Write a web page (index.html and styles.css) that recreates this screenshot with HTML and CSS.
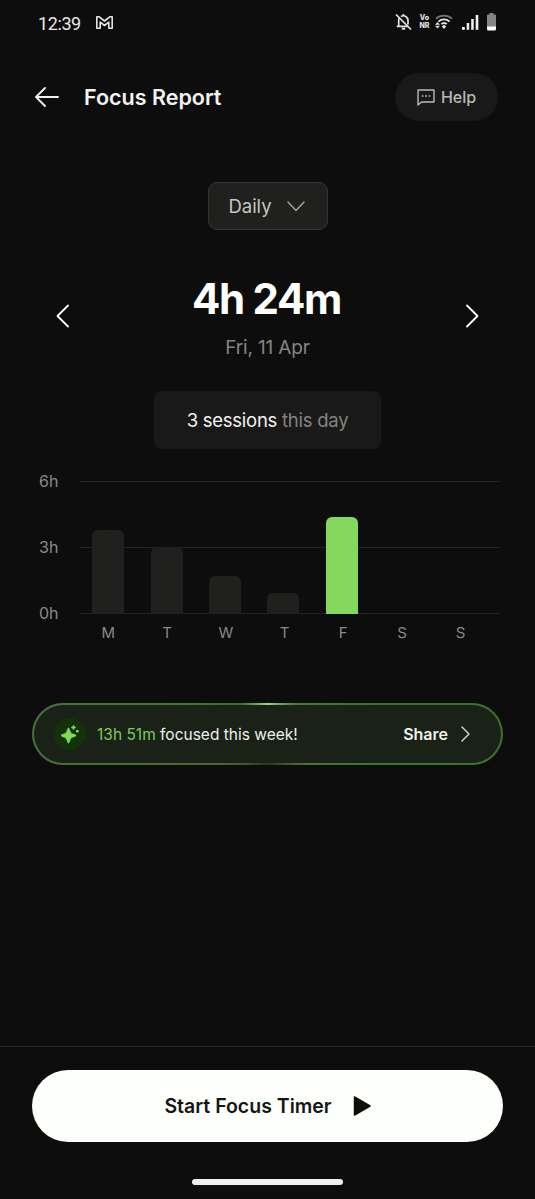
FILE: index.html
```html
<!DOCTYPE html>
<html lang="en">

<head>
    <meta charset="UTF-8">
    <meta name="viewport" content="width=device-width, initial-scale=1.0">
    <title>Focus Report</title>
    <link rel="stylesheet" href="styles.css">
</head>

<body>
    <div class="screen">
        <!-- Status bar -->
        <div class="status-bar">
            <span class="clock">12:39</span>
            <svg class="mail" width="17" height="13" viewBox="0 0 17 13" fill="none" stroke="#e4e4e4" stroke-width="1.6" stroke-linejoin="round">
                <path d="M.8 12.2V.8h2.400L8.500 5 13.800.8h2.400v11.400h-3.400V6.200L8.500 9.500 4.200 6.200v6z" />
            </svg>
            <div class="status-icons">
                <svg width="17" height="18" viewBox="0 0 17 18" fill="none" stroke="#e4e4e4" stroke-width="1.7">
                    <path d="M3.7 13V7.5c0-1 .3-1.900.8-2.700M6 3.500C9.500 1.500 13 4 13 7.500v4M1.700 13.300h11.500M8.400 3V1" />
                    <path d="M1 1.500l15 15" />
                    <path d="M6.800 15.700h3.400" stroke-width="2" />
                </svg>
                <span class="vonr"><span>Vo</span><span>NR</span></span>
                <svg class="wifi" width="18" height="16" viewBox="0 0 18 16" fill="none" stroke="#e4e4e4" stroke-width="1.8">
                    <path d="M1 4.600c4.600-4.100 11.400-4.100 16 0" stroke="#777" />
                    <path d="M3.400 7.600c3.300-3 8-3 11.200 0M6.300 10.200c1.700-1.500 3.900-1.500 5.500 0" />
                    <path d="M9 10.800l2.200 1.600L9 15l-2.200-2.600z" fill="#e4e4e4" stroke="none" />
                    <path d="M2.500 8L5 10.800H0zM2.500 14.500L5 11.700H0z" fill="#e4e4e4" stroke="none" />
                </svg>
                <svg class="signal" width="17" height="15" viewBox="0 0 17 15" fill="#f2f2f2">
                    <rect x="0" y="12" width="2.8" height="2.8" />
                    <rect x="4.7" y="8" width="2.5" height="6.8" />
                    <rect x="9.2" y="4" width="2.5" height="10.8" />
                    <rect x="13.7" y="0" width="2.6" height="14.8" />
                </svg>
                <svg class="battery" width="9" height="18" viewBox="0 0 9 18">
                    <path d="M2.500 0h4v1.500H8a1 1 0 0 1 1 1V14H0V2.500a1 1 0 0 1 1-1h1.500z" fill="#858585" />
                    <path d="M0 13.500h9V16a1.500 1.500 0 0 1-1.500 1.500h-6A1.500 1.500 0 0 1 0 16z" fill="#fff" />
                </svg>
            </div>
        </div>

        <!-- Header -->
        <header class="header">
            <svg class="back" width="24" height="20" viewBox="0 0 24 20" fill="none" stroke="#f2f2f0" stroke-width="1.8" stroke-linecap="round" stroke-linejoin="round">
                <path d="M23 10H1M10 1L1 10l9 9" />
            </svg>
            <h1>Focus Report</h1>
            <button class="help">
                <svg width="18" height="17" viewBox="0 0 18 17" fill="none" stroke="#b9b9b7" stroke-width="1.4" stroke-linejoin="round">
                    <path d="M1 1h16v12H4.500L1 16z" />
                    <path d="M4.800 7h1.700M8.200 7h1.700M11.600 7h1.700" stroke-width="1.7" />
                </svg>
                <span>Help</span>
            </button>
        </header>

        <!-- Period -->
        <button class="period">
            <span>Daily</span>
            <svg width="18" height="11" viewBox="0 0 18 11" fill="none" stroke="#a3a3a0" stroke-width="1.4" stroke-linecap="round" stroke-linejoin="round">
                <path d="M1 1l8 8.500L17 1" />
            </svg>
        </button>

        <div class="summary">
            <svg width="14" height="24" viewBox="0 0 14 24" fill="none" stroke="#fff" stroke-width="1.8" stroke-linecap="round" stroke-linejoin="round">
                <path d="M12 1.500L1.500 12 12 22.500" />
            </svg>
            <div class="total">
                <div class="time">4h 24m</div>
                <div class="date">Fri, 11 Apr</div>
            </div>
            <svg width="14" height="24" viewBox="0 0 14 24" fill="none" stroke="#fff" stroke-width="1.8" stroke-linecap="round" stroke-linejoin="round">
                <path d="M2 1.500L12.500 12 2 22.500" />
            </svg>
        </div>

        <div class="sessions"><b>3 sessions</b>&nbsp;<span>this day</span></div>

        <!-- Weekly chart -->
        <div class="chart">
            <div class="scale">
                <span>6h</span>
                <span>3h</span>
                <span>0h</span>
            </div>
            <div class="plot">
                <div class="lines"><i></i><i></i><i></i></div>
                <div class="bars">
                    <div class="bar" style="height: 84px"></div>
                    <div class="bar" style="height: 67px"></div>
                    <div class="bar" style="height: 38px"></div>
                    <div class="bar" style="height: 21px"></div>
                    <div class="bar active" style="height: 97px"></div>
                    <div class="bar" style="height: 0"></div>
                    <div class="bar" style="height: 0"></div>
                </div>
            </div>
            <div class="days">
                <span>M</span><span>T</span><span>W</span><span>T</span><span>F</span><span>S</span><span>S</span>
            </div>
        </div>

        <!-- Share banner -->
        <div class="banner">
            <div class="sparkle">
                <svg width="18" height="19" viewBox="0 0 18 19" fill="#7bdc58">
                    <path d="M7.500 3q.8 0 1.200 1.700c.7 3 1.600 3.900 4.600 4.600Q15 9.700 15 10.500t-1.700 1.200c-3 .7-3.900 1.600-4.600 4.600Q8.300 18 7.500 18t-1.200-1.700c-.7-3-1.600-3.900-4.600-4.600Q0 11.300 0 10.500t1.700-1.200c3-.7 3.900-1.600 4.600-4.600Q6.700 3 7.500 3z" stroke="#7bdc58" stroke-width=".6" />
                    <path d="M12.500 0q.4 2.100 2.500 2.500-2.100.4-2.500 2.500-.4-2.100-2.500-2.500 2.100-.4 2.500-2.500z" stroke="#7bdc58" stroke-width=".5" />
                    <circle cx="16.3" cy="6.2" r="1.4" />
                </svg>
            </div>
            <p><em>13h 51m</em> focused this week!</p>
            <a class="share">Share</a>
            <svg width="9" height="16" viewBox="0 0 9 16" fill="none" stroke="#d9ddd5" stroke-width="1.4" stroke-linecap="round" stroke-linejoin="round">
                <path d="M1 1l7 7-7 7" />
            </svg>
        </div>

        <!-- Bottom action -->
        <footer class="footer">
            <button class="start">
                <span>Start Focus Timer</span>
                <svg width="18" height="20" viewBox="0 0 18 20" fill="#0d0d0d" stroke="#0d0d0d" stroke-width="1.5" stroke-linejoin="round">
                    <path d="M1.500 1v18L17 10z" />
                </svg>
            </button>
            <div class="home-bar"></div>
        </footer>
    </div>
</body>

</html>
```
FILE: styles.css
```css
* {
    box-sizing: border-box;
}

body {
    margin: 0;
    background-color: #0d0d0d;
    color: #fff;
    font-family: Inter, "Liberation Sans", sans-serif;
}

button {
    font-family: inherit;
    padding: 0;
    border: none;
    display: flex;
    align-items: center;
    justify-content: center;
}

svg {
    display: block;
    flex-shrink: 0;
}

.screen {
    width: 535px;
    height: 1199px;
    display: flex;
    flex-direction: column;
    overflow: hidden;
}

/* Status bar */
.status-bar {
    height: 46px;
    padding: 0 39px 0 38px;
    display: flex;
    align-items: center;
    flex-shrink: 0;
}

.clock {
    width: 58px;
    font-family: Roboto, sans-serif;
    font-size: 18px;
    letter-spacing: -0.4px;
    color: #e8e8e8;
}

.mail {
    margin-bottom: 2px;
}

.status-icons {
    margin: 0 0 2px auto;
    display: flex;
    align-items: center;
}

.vonr {
    display: flex;
    flex-direction: column;
    width: 13px;
    margin-left: 6px;
    font-size: 7px;
    line-height: 8px;
    font-weight: 800;
    text-align: center;
    color: #e4e4e4;
}

.wifi {
    margin-left: 4px;
}

.signal {
    margin-left: 9px;
}

.battery {
    margin-left: 8px;
}

/* Header */
.header {
    height: 102px;
    padding: 0 37px 0 35px;
    display: flex;
    align-items: center;
    flex-shrink: 0;
}

.header h1 {
    margin: 0 auto 0 25px;
    font-size: 21.5px;
    font-weight: 600;
    color: #f2f2f0;
}

.help {
    width: 103px;
    height: 48px;
    gap: 6px;
    border-radius: 24px;
    background-color: #191919;
    color: #b9b9b7;
    font-size: 16px;
    font-weight: 500;
}

/* Period */
.period {
    width: 120px;
    height: 48px;
    margin: 34px auto 0;
    padding-right: 2px;
    flex-shrink: 0;
    gap: 15px;
    border: 1px solid #343432;
    border-radius: 9px;
    background-color: #20201e;
    color: #c6c6c3;
    font-size: 18.5px;
}

.summary {
    height: 161px;
    padding: 10px 56px 0;
    display: flex;
    align-items: center;
    justify-content: space-between;
    flex-shrink: 0;
}

.total {
    padding-top: 3px;
    text-align: center;
}

.time {
    font-size: 42px;
    line-height: 50px;
    font-weight: 700;
    letter-spacing: -1.3px;
    margin-right: 2px;
    color: #fefffb;
}

.date {
    margin-top: 12px;
    font-size: 19px;
    line-height: 24px;
    letter-spacing: -0.15px;
    color: #858583;
}

.sessions {
    width: 227px;
    height: 58px;
    margin: 0 auto;
    display: flex;
    align-items: center;
    justify-content: center;
    flex-shrink: 0;
    border-radius: 8px;
    background-color: #191919;
    color: #848482;
    font-size: 18.5px;
    letter-spacing: -0.25px;
}

.sessions b {
    font-weight: 400;
    color: #f3f3f0;
}

/* Chart */
.chart {
    margin: 32px 35px 0 39px;
    display: grid;
    grid-template-columns: 40px 1fr;
    flex-shrink: 0;
}

.scale {
    height: 152px;
    margin-top: -10px;
    display: flex;
    flex-direction: column;
    justify-content: space-between;
    color: #8a8a88;
    font-size: 16px;
    line-height: 20px;
}

.plot {
    display: grid;
    height: 133px;
}

.lines,
.bars {
    grid-area: 1 / 1;
    display: flex;
}

.lines {
    flex-direction: column;
    justify-content: space-between;
}

.lines i {
    height: 1px;
    background-color: #242424;
}

.bars {
    align-items: flex-end;
    padding-right: 12px;
    justify-content: space-around;
}

.bar {
    width: 32px;
    border-radius: 6px 6px 0 0;
    background-color: #20201e;
}

.bar.active {
    background-color: #84d85d;
}

.days {
    grid-column: 2;
    padding-right: 10px;
    display: flex;
    color: #8a8a88;
    font-size: 15px;
    line-height: 20px;
}

.days span {
    flex: 1;
    text-align: center;
}

/* Share banner */
.banner {
    height: 62px;
    margin: 60px 32px 0;
    padding: 0 31px 0 20px;
    display: flex;
    align-items: center;
    flex-shrink: 0;
    border: 2px solid transparent;
    border-radius: 31px;
    background:
        linear-gradient(#1a2116, #1a2116) padding-box,
        conic-gradient(from 0deg, #9ad67a, #4f7a3a 12%, #39702a 23%, #487537 35%, #1e3b17 50%, #41692f 65%, #487537 77%, #39702a 88%, #9ad67a) border-box;
}

.sparkle {
    width: 32px;
    height: 32px;
    display: flex;
    align-items: center;
    justify-content: center;
    border-radius: 50%;
    background-color: #14310b;
}

.banner p {
    margin: 0 auto 0 11px;
    font-size: 15.5px;
    color: #eef0eb;
}

.banner em {
    font-style: normal;
    color: #7ccb5b;
}

.share {
    margin-right: 13px;
    font-size: 16px;
    font-weight: 600;
    color: #eef0eb;
}

/* Bottom action */
.footer {
    height: 153px;
    margin-top: auto;
    padding: 23px 32px 0;
    flex-shrink: 0;
    border-top: 1px solid #262626;
}

.start {
    width: 100%;
    height: 72px;
    gap: 21px;
    border-radius: 36px;
    background-color: #fdfffa;
    color: #151515;
    font-size: 19.5px;
    font-weight: 600;
}

.home-bar {
    width: 151px;
    height: 6px;
    margin: 37px auto 0;
    border-radius: 3px;
    background-color: #efefef;
}
```
